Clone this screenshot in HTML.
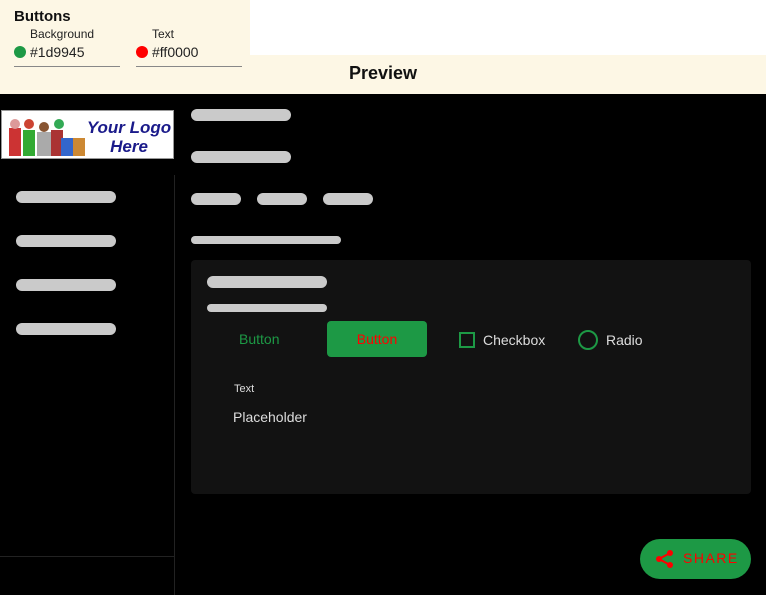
<!DOCTYPE html>
<html><head><meta charset="utf-8"><style>
*{margin:0;padding:0;box-sizing:border-box}
body{width:766px;height:595px;overflow:hidden;background:#000;font-family:"Liberation Sans",Arial,sans-serif;position:relative}
.a{position:absolute}
.bar{position:absolute;background:#cacaca;border-radius:6px}
</style></head><body>
<div class="a" style="left:0;top:0;width:250px;height:55px;background:#fdf7e5"></div>
<div class="a" style="left:250px;top:0;width:516px;height:55px;background:#fff"></div>
<div class="a" style="left:0;top:55px;width:766px;height:39px;background:#fdf7e5"></div>
<div class="a" style="left:14px;top:8px;font-size:15px;font-weight:bold;color:#111">Buttons</div>
<div class="a" style="left:30px;top:27px;font-size:12px;color:#222">Background</div>
<div class="a" style="left:152px;top:27px;font-size:12px;color:#222">Text</div>
<div class="a" style="left:14px;top:46px;width:12px;height:12px;border-radius:50%;background:#1d9945"></div>
<div class="a" style="left:30px;top:44px;font-size:14px;color:#222">#1d9945</div>
<div class="a" style="left:136px;top:46px;width:12px;height:12px;border-radius:50%;background:#ff0000"></div>
<div class="a" style="left:152px;top:44px;font-size:14px;color:#222">#ff0000</div>
<div class="a" style="left:14px;top:66px;width:106px;height:1px;background:#888"></div>
<div class="a" style="left:136px;top:66px;width:106px;height:1px;background:#888"></div>
<div class="a" style="left:0;top:63px;width:766px;text-align:center;font-size:18px;font-weight:bold;color:#111">Preview</div>

<svg class="a" style="left:1px;top:110px" width="173" height="49" viewBox="0 0 173 49">
<rect x="0.5" y="0.5" width="172" height="48" fill="#fff" stroke="#999"/>
<rect x="8" y="18" width="12" height="28" fill="#c33"/><circle cx="14" cy="14" r="5" fill="#d99"/>
<rect x="22" y="20" width="12" height="26" fill="#3a3"/><circle cx="28" cy="14" r="5" fill="#c43"/>
<rect x="36" y="22" width="14" height="24" fill="#aaa"/><circle cx="43" cy="17" r="5" fill="#853"/>
<rect x="50" y="20" width="12" height="26" fill="#a33"/><circle cx="58" cy="14" r="5" fill="#3a5"/>
<rect x="60" y="28" width="14" height="18" fill="#36c"/><rect x="72" y="28" width="12" height="18" fill="#c83"/>
<text x="128" y="23" text-anchor="middle" font-family="Liberation Sans" font-weight="bold" font-style="italic" font-size="17" fill="#1a1a8a">Your Logo</text>
<text x="128" y="42" text-anchor="middle" font-family="Liberation Sans" font-weight="bold" font-style="italic" font-size="17" fill="#1a1a8a">Here</text>
</svg>

<div class="a" style="left:174px;top:175px;width:1px;height:420px;background:#222"></div>
<div class="a" style="left:0;top:556px;width:174px;height:1px;background:#222"></div>
<div class="bar" style="left:16px;top:191px;width:100px;height:12px"></div>
<div class="bar" style="left:16px;top:235px;width:100px;height:12px"></div>
<div class="bar" style="left:16px;top:279px;width:100px;height:12px"></div>
<div class="bar" style="left:16px;top:323px;width:100px;height:12px"></div>

<div class="bar" style="left:191px;top:109px;width:100px;height:12px"></div>
<div class="bar" style="left:191px;top:151px;width:100px;height:12px"></div>
<div class="bar" style="left:191px;top:193px;width:50px;height:12px"></div>
<div class="bar" style="left:257px;top:193px;width:50px;height:12px"></div>
<div class="bar" style="left:323px;top:193px;width:50px;height:12px"></div>
<div class="bar" style="left:191px;top:236px;width:150px;height:8px;border-radius:4px"></div>

<div class="a" style="left:191px;top:260px;width:560px;height:234px;background:#121212;border-radius:4px"></div>
<div class="bar" style="left:207px;top:276px;width:120px;height:12px"></div>
<div class="bar" style="left:207px;top:304px;width:120px;height:8px;border-radius:4px"></div>
<div class="a" style="left:239px;top:331px;font-size:14px;color:#1d9945">Button</div>
<div class="a" style="left:327px;top:321px;width:100px;height:36px;background:#1d9945;border-radius:4px;color:#f00;font-size:14px;text-align:center;line-height:36px">Button</div>
<div class="a" style="left:459px;top:332px;width:16px;height:16px;border:2px solid #1d9945"></div>
<div class="a" style="left:483px;top:332px;font-size:14px;color:#ddd">Checkbox</div>
<div class="a" style="left:578px;top:330px;width:20px;height:20px;border:2px solid #1d9945;border-radius:50%"></div>
<div class="a" style="left:606px;top:332px;font-size:14px;color:#ddd">Radio</div>
<div class="a" style="left:234px;top:383px;font-size:11px;color:#ddd">Text</div>
<div class="a" style="left:233px;top:409px;font-size:14px;color:#ddd">Placeholder</div>

<div class="a" style="left:640px;top:539px;width:111px;height:40px;background:#1d9945;border-radius:20px"></div>
<svg class="a" style="left:655px;top:549px" width="20" height="20" viewBox="0 0 20 20">
<path d="M15 4 L4 10 L15 16" stroke="#f00" stroke-width="2" fill="none"/>
<circle cx="15" cy="4" r="3" fill="#f00"/><circle cx="4" cy="10" r="3" fill="#f00"/><circle cx="15" cy="16" r="3" fill="#f00"/>
</svg>
<div class="a" style="left:683px;top:550px;font-size:14px;color:#f00;letter-spacing:1.5px">SHARE</div>
</body></html>
